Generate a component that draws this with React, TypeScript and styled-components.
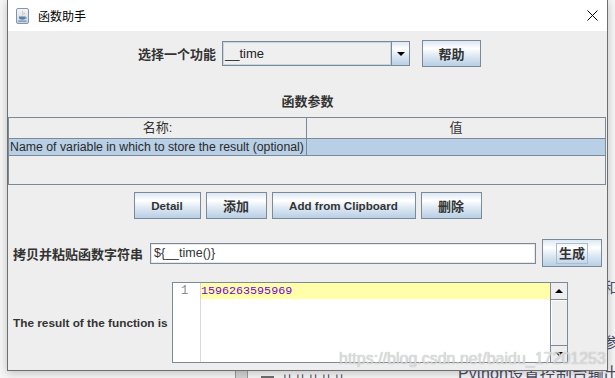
import * as React from 'react';
import styled, { createGlobalStyle } from 'styled-components';

const GlobalStyle = createGlobalStyle`
  html, body {
    margin: 0;
    padding: 0;
  }
  body {
    width: 615px;
    height: 378px;
    overflow: hidden;
    background: #f5f5f5;
    font-family: "Liberation Sans", Arial, sans-serif;
  }
`;

const CJK = '"Liberation Sans", "Noto Sans CJK SC", sans-serif';

const Desktop = styled.div`
  position: relative;
  width: 615px;
  height: 378px;
  overflow: hidden;
  background: #f6f6f6;
`;

// bits of the page that lies behind the dialog
const BehindText = styled.span<{ $size: number }>`
  position: absolute;
  font-family: ${CJK};
  font-size: ${p => p.$size}px;
  line-height: 1;
  color: #4a4a66;
  white-space: nowrap;
`;

const BehindScroll = styled.div`
  position: absolute;
  left: 235px;
  top: 371px;
  width: 11px;
  height: 8px;
  background: #d4d4d4;
  border-left: 1px solid #9a9a9a;
  border-right: 1px solid #9a9a9a;
`;

const BehindIcon = styled.div`
  position: absolute;
  left: 261px;
  top: 376px;
  width: 13px;
  height: 3px;
  background: #6f6f6f;
`;

const Window = styled.div`
  position: absolute;
  left: 7px;
  top: 0;
  width: 599px;
  border: 1px solid #6e6e6e;
  border-top: none;
  box-shadow: 0 2px 9px rgba(0, 0, 0, 0.22);
  display: flex;
  flex-direction: column;
  z-index: 1;
`;

const TitleBar = styled.div`
  height: 31px;
  background: #ffffff;
  display: flex;
  align-items: center;
  padding: 0 9px 0 8px;
`;

const TitleText = styled.span`
  flex: 1;
  margin-left: 9px;
  font-family: "Noto Sans CJK SC", sans-serif;
  font-size: 12px;
  color: #000;
`;

const Body = styled.div`
  height: 339px;
  box-sizing: border-box;
  padding: 9px 0 7px;
  background: #eeeeee;
  display: flex;
  flex-direction: column;
`;

const TopRow = styled.div`
  height: 27px;
  padding-left: 130px;
  display: flex;
  align-items: center;
`;

const Label = styled.span<{ $size?: number }>`
  font-family: ${CJK};
  font-weight: bold;
  font-size: ${p => p.$size ?? 13}px;
  color: #333333;
  white-space: nowrap;
`;

const Combo = styled.div`
  width: 188px;
  height: 25px;
  box-sizing: border-box;
  margin: 0 12px 0 6px;
  border: 1px solid #7a8a99;
  display: flex;
`;

const ComboValue = styled.div`
  flex: 1;
  padding-left: 2px;
  background: #efefef;
  box-shadow: inset 0 0 0 1px #c6d5e4;
  font-size: 13px;
  line-height: 23px;
  color: #222;
`;

const gradient = 'linear-gradient(to bottom, #dde8f3 0%, #ffffff 30%, #dde8f3 60%, #b8cfe5 100%)';

const ComboArrow = styled.div`
  width: 17px;
  border-left: 1px solid #7a8a99;
  background: ${gradient};
  display: flex;
  align-items: center;
  justify-content: center;
`;

const Triangle = styled.span<{ $up?: boolean }>`
  width: 0;
  height: 0;
  border-left: 4px solid transparent;
  border-right: 4px solid transparent;
  ${p => (p.$up ? 'border-bottom: 4px solid #000;' : 'border-top: 4px solid #000;')}
`;

const Button = styled.button<{ $w: number; $h: number }>`
  width: ${p => p.$w}px;
  height: ${p => p.$h}px;
  flex: 0 0 auto;
  box-sizing: border-box;
  padding: 0;
  border: 1px solid #7a8a99;
  border-radius: 0;
  background: ${gradient};
  font-family: ${CJK};
  font-weight: bold;
  font-size: 11.6px;
  color: #333333;
  display: flex;
  align-items: center;
  justify-content: center;
`;

const CjkButtonText = styled.span`
  font-size: 13px;
`;

const FocusRing = styled.span`
  box-sizing: border-box;
  height: 21px;
  padding: 0 2px;
  border: 1px solid #a9bdd3;
  font-size: 13px;
  line-height: 19px;
`;

const SectionTitle = styled.div`
  margin-top: 27px;
  height: 16px;
  text-align: center;
  font-family: ${CJK};
  font-weight: bold;
  font-size: 13px;
  line-height: 16px;
  color: #333333;
`;

const Table = styled.div`
  margin: 7px 1px 0 0;
  height: 68px;
  box-sizing: border-box;
  border: 1px solid #7a8a99;
  display: flex;
  flex-direction: column;
`;

const TableRow = styled.div<{ $h: number; $selected?: boolean }>`
  height: ${p => p.$h}px;
  flex: 0 0 auto;
  display: grid;
  grid-template-columns: 297px 1fr;
  border-bottom: 1px solid #7a8a99;
  background: ${p => (p.$selected ? '#b8cfe5' : '#eeeeee')};
`;

const HeaderCell = styled.div`
  font-family: ${CJK};
  font-size: 13px;
  line-height: 20px;
  text-align: center;
  color: #333333;
  & + & {
    border-left: 1px solid #7a8a99;
  }
`;

const Cell = styled.div`
  padding-left: 1px;
  font-size: 12.3px;
  line-height: 16px;
  color: #2a2a2a;
  white-space: nowrap;
  overflow: hidden;
  & + & {
    border-left: 1px solid #7a8a99;
  }
`;

const ButtonRow = styled.div`
  margin-top: 7px;
  display: flex;
  justify-content: center;
  gap: 5px;
`;

const CopyRow = styled.div`
  margin-top: 20px;
  height: 28px;
  padding: 0 5px;
  display: flex;
  align-items: center;
`;

const TextField = styled.div`
  width: 389px;
  height: 21px;
  box-sizing: border-box;
  margin: 0 6px 0 7px;
  border: 1px solid #7a8a99;
  box-shadow: inset 0 0 0 1px #e4e9ee;
  background: #ffffff;
  padding-left: 3px;
  font-size: 12.5px;
  line-height: 19px;
  color: #333333;
`;

const ResultRow = styled.div`
  margin-top: 15px;
  height: 81px;
  padding-left: 5px;
  display: flex;
  align-items: center;
`;

const ResultLabel = styled.span`
  flex: 0 0 159px;
  font-weight: bold;
  font-size: 11.8px;
  color: #333333;
  white-space: nowrap;
`;

const Editor = styled.div`
  width: 396px;
  height: 81px;
  box-sizing: border-box;
  border: 1px solid #7a8a99;
  background: #ffffff;
  display: flex;
`;

const Gutter = styled.div`
  width: 28px;
  box-sizing: border-box;
  border-right: 1px solid #d9d9d9;
  padding-left: 8px;
  font-family: "Liberation Mono", monospace;
  font-size: 12px;
  line-height: 16px;
  color: #8a8a8a;
`;

const Lines = styled.div`
  flex: 1;
`;

const CurrentLine = styled.div`
  height: 16px;
  background: #ffffaa;
  font-family: "Liberation Mono", monospace;
  font-size: 11.7px;
  line-height: 16px;
  color: #7a00d4;
`;

const ScrollBar = styled.div`
  width: 16px;
  border-left: 1px solid #7a8a99;
  background: #eeeeee;
  display: flex;
  flex-direction: column;
`;

const ScrollButton = styled.div`
  height: 16px;
  box-sizing: border-box;
  display: flex;
  align-items: center;
  justify-content: center;
  background: #eeeeee;
`;

const ScrollTrack = styled.div`
  flex: 1;
  border-top: 1px solid #7a8a99;
  border-bottom: 1px solid #7a8a99;
  box-shadow: inset 1px 1px 0 #ffffff;
`;

const Watermark = styled.span`
  position: absolute;
  left: 339px;
  top: 349px;
  z-index: 2;
  font-size: 16px;
  line-height: 20px;
  color: rgba(228, 228, 228, 0.85);
  text-shadow: 0 0 1px rgba(110, 110, 110, 0.6);
  white-space: nowrap;
  pointer-events: none;
`;

function JavaIcon() {
  return (
    <svg width="13" height="16" viewBox="0 0 13 16">
      <defs>
        <linearGradient id="frame" x1="0" y1="0" x2="0" y2="1">
          <stop offset="0" stopColor="#f4f7fa" />
          <stop offset="1" stopColor="#c9d5e2" />
        </linearGradient>
      </defs>
      <rect x="0.5" y="0.5" width="12" height="15" rx="1.5" fill="url(#frame)" stroke="#8395aa" />
      <path d="M6.6 2.2 C5.2 4 8.2 4.9 6.3 7.4 C8.6 5.9 6.2 4.6 6.6 2.2Z" fill="#e7731c" />
      <path d="M7.9 4.2 C7.4 5.2 8.6 5.6 7.7 6.8 C9 6 8.3 5.1 7.9 4.2Z" fill="#e7731c" />
      <path d="M3 8.6 H9.4 V9.6 C9.4 11 8 11.8 6.2 11.8 C4.4 11.8 3 11 3 9.6Z" fill="#5a7fa3" />
      <path d="M9.4 9.2 C10.8 9.2 10.8 10.8 9.2 10.9" fill="none" stroke="#5a7fa3" strokeWidth="0.8" />
      <path d="M2.2 13.1 H10.6" stroke="#5a7fa3" strokeWidth="1" />
    </svg>
  );
}

function CloseIcon() {
  return (
    <svg width="11" height="11" viewBox="0 0 11 11">
      <path d="M0.5 0.5 L10.5 10.5 M10.5 0.5 L0.5 10.5" stroke="#000" strokeWidth="1" />
    </svg>
  );
}

export default function App() {
  return (
    <Desktop>
      <GlobalStyle />
      <BehindText $size={15} style={{ left: 603, top: 280 }}>和</BehindText>
      <BehindText $size={15} style={{ left: 603, top: 335 }}>参</BehindText>
      <BehindText $size={16} style={{ left: 458, top: 366 }}>Python设置控制台输出文</BehindText>
      <BehindText $size={13} style={{ left: 282, top: 374 }}>片片片片片</BehindText>
      <BehindScroll />
      <BehindIcon />

      <Window>
        <TitleBar>
          <JavaIcon />
          <TitleText>函数助手</TitleText>
          <CloseIcon />
        </TitleBar>

        <Body>
          <TopRow>
            <Label>选择一个功能</Label>
            <Combo>
              <ComboValue>__time</ComboValue>
              <ComboArrow>
                <Triangle />
              </ComboArrow>
            </Combo>
            <Button $w={59} $h={27}>
              <CjkButtonText>帮助</CjkButtonText>
            </Button>
          </TopRow>

          <SectionTitle>函数参数</SectionTitle>

          <Table>
            <TableRow $h={20}>
              <HeaderCell>名称:</HeaderCell>
              <HeaderCell>值</HeaderCell>
            </TableRow>
            <TableRow $h={16} $selected>
              <Cell>Name of variable in which to store the result (optional)</Cell>
              <Cell />
            </TableRow>
          </Table>

          <ButtonRow>
            <Button $w={67} $h={27}>Detail</Button>
            <Button $w={61} $h={27}>
              <CjkButtonText>添加</CjkButtonText>
            </Button>
            <Button $w={144} $h={27}>Add from Clipboard</Button>
            <Button $w={61} $h={27}>
              <CjkButtonText>删除</CjkButtonText>
            </Button>
          </ButtonRow>

          <CopyRow>
            <Label>拷贝并粘贴函数字符串</Label>
            <TextField>{'${__time()}'}</TextField>
            <Button $w={60} $h={28}>
              <FocusRing>生成</FocusRing>
            </Button>
          </CopyRow>

          <ResultRow>
            <ResultLabel>The result of the function is</ResultLabel>
            <Editor>
              <Gutter>1</Gutter>
              <Lines>
                <CurrentLine>1596263595969</CurrentLine>
              </Lines>
              <ScrollBar>
                <ScrollButton>
                  <Triangle $up />
                </ScrollButton>
                <ScrollTrack />
                <ScrollButton>
                  <Triangle />
                </ScrollButton>
              </ScrollBar>
            </Editor>
          </ResultRow>
        </Body>
      </Window>

      <Watermark>https://blog.csdn.net/baidu_17201253</Watermark>
    </Desktop>
  );
}
